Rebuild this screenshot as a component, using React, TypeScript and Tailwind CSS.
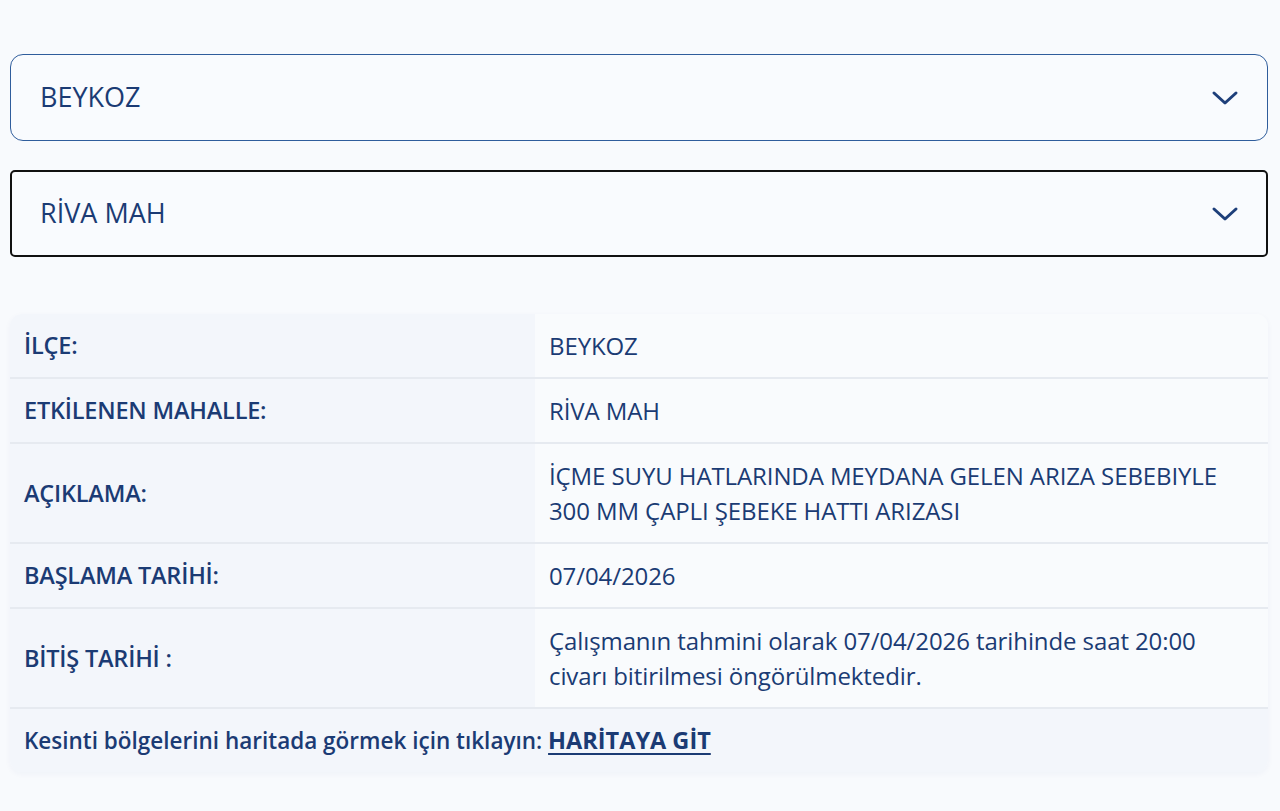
import React from "react";

const Chevron = () => (
  <svg width="28" height="16" viewBox="0 0 28 16" fill="none">
    <path d="M3 3l11 10L25 3" stroke="#1e3f7a" strokeWidth="3" strokeLinecap="round" strokeLinejoin="round" />
  </svg>
);

const rows: { label: string; value: React.ReactNode }[] = [
  { label: "İLÇE:", value: "BEYKOZ" },
  { label: "ETKİLENEN MAHALLE:", value: "RİVA MAH" },
  {
    label: "AÇIKLAMA:",
    value: (
      <>
        İÇME SUYU HATLARINDA MEYDANA GELEN ARIZA SEBEBIYLE
        <br />
        300 MM ÇAPLI ŞEBEKE HATTI ARIZASI
      </>
    ),
  },
  { label: "BAŞLAMA TARİHİ:", value: "07/04/2026" },
  {
    label: "BİTİŞ TARİHİ :",
    value: (
      <>
        Çalışmanın tahmini olarak 07/04/2026 tarihinde saat 20:00
        <br />
        civarı bitirilmesi öngörülmektedir.
      </>
    ),
  },
];

export default function App() {
  return (
    <div
      className="min-h-[811px] w-[1280px] bg-[#f8fafd] text-[#1b3b74]"
      style={{ fontFamily: "'Open Sans', 'Noto Sans', sans-serif" }}
    >
      <div className="px-[10px] pt-[54px] pr-[12px]">
        <div className="flex h-[87px] items-center justify-between rounded-[13px] border border-[#2f5d9c] bg-[#f9fbfe] pl-[29px] pr-[28px]">
          <span className="text-[27px]">BEYKOZ</span>
          <Chevron />
        </div>
        <div className="mt-[29px] flex h-[87px] items-center justify-between rounded-[5px] border-2 border-[#111] bg-[#f9fbfe] pl-[28px] pr-[27px]">
          <span className="text-[27px]">RİVA MAH</span>
          <Chevron />
        </div>

        <div className="mt-[57px] overflow-hidden rounded-[12px] shadow-[0_2px_6px_rgba(30,60,120,0.04)]">
          {rows.map((r, i) => (
            <div key={i} className="flex border-b-2 border-[#e6eaf0]">
              <div className="flex w-[525px] items-center bg-[#f3f6fb] py-[14px] pl-[14px] text-[23.5px] font-semibold leading-[35px] tracking-[-0.2px]">
                {r.label}
              </div>
              <div className="flex flex-1 items-center bg-[#f9fbfd] py-[14px] pl-[14px] text-[24px] leading-[35px] tracking-[-0.1px]">
                <div>{r.value}</div>
              </div>
            </div>
          ))}
          <div className="bg-[#f3f6fb] py-[14px] pl-[14px] text-[22.5px] font-semibold leading-[35px] tracking-[0px]">
            Kesinti bölgelerini haritada görmek için tıklayın:{" "}
            <a href="#" className="text-[23.5px] font-bold underline underline-offset-[4px] decoration-2">
              HARİTAYA GİT
            </a>
          </div>
        </div>
      </div>
    </div>
  );
}
